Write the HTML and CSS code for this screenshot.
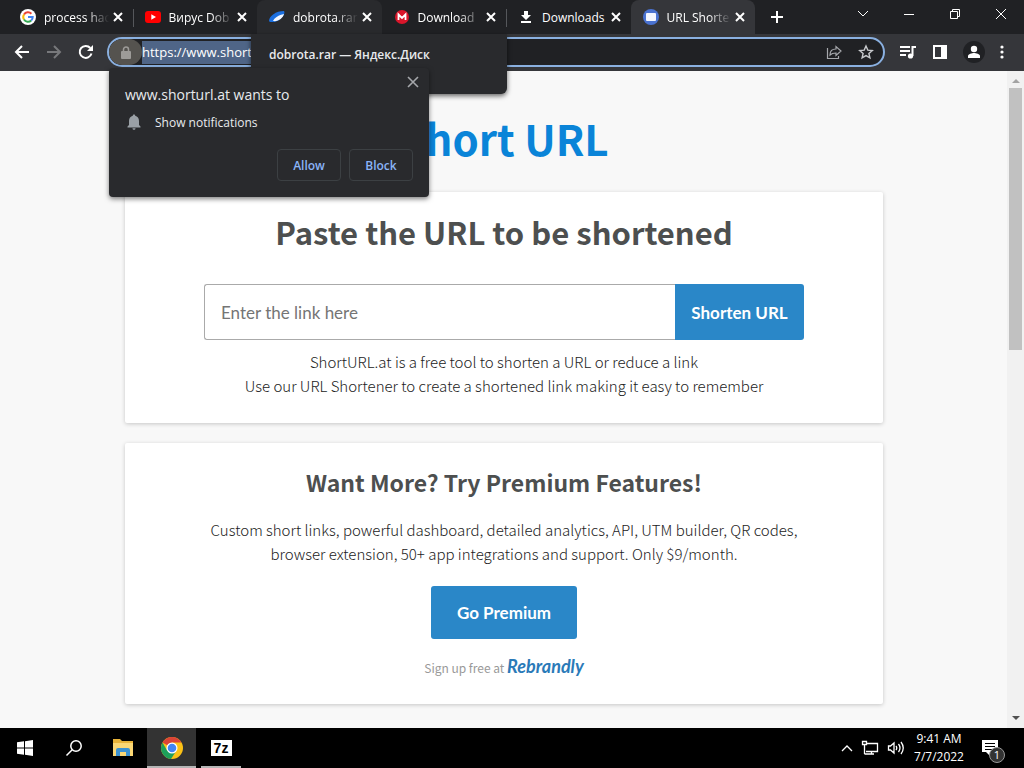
FILE: index.html
```html
<!DOCTYPE html>
<html lang="en">
<head>
  <meta charset="UTF-8">
  <meta name="viewport" content="width=device-width, initial-scale=1.0">
  <title>URL Shortener</title>
  <link rel="stylesheet" href="styles.css">
</head>
<body>
  <header class="browser">
    <div class="tabstrip">
      <div class="tabs">
        <div class="tab">
          <svg class="favicon" viewBox="0 0 16 16"><circle cx="8" cy="8" r="8" fill="#fff"/><g fill="none" stroke-width="2"><path d="M11.4 4.7A4.7 4.7 0 0 0 4 5.5" stroke="#ea4335"/><path d="M4 5.5a4.7 4.7 0 0 0 0 5" stroke="#fbbc05"/><path d="M4 10.5a4.7 4.7 0 0 0 7.2 1" stroke="#34a853"/><path d="M11.2 11.5A4.7 4.7 0 0 0 12.7 8H8" stroke="#4285f4"/></g></svg>
          <span class="title">process hac</span>
          <button class="close" aria-label="Close tab"><svg viewBox="0 0 10 10"><path d="M1 1l8 8M9 1L1 9"/></svg></button>
        </div>
        <div class="tab line">
          <svg class="favicon" viewBox="0 0 16 16"><rect y="2" width="16" height="12" rx="3" fill="#f00"/><path d="M6.300 5.300L11 8l-4.700 2.700z" fill="#fff"/></svg>
          <span class="title">Вирус Dob</span>
          <button class="close" aria-label="Close tab"><svg viewBox="0 0 10 10"><path d="M1 1l8 8M9 1L1 9"/></svg></button>
        </div>
        <div class="tab hover">
          <svg class="favicon" viewBox="0 0 16 16"><path d="M0 12C0 7 7 2 15 2c2 3-4 11-11 11-2 0-4 0-4-1z" fill="#1b6fe0"/><path d="M4 12c1-3 6-6 11-7-1 4-6 8-11 7z" fill="#f4f8ff"/></svg>
          <span class="title">dobrota.rar</span>
          <button class="close" aria-label="Close tab"><svg viewBox="0 0 10 10"><path d="M1 1l8 8M9 1L1 9"/></svg></button>
        </div>
        <div class="tab">
          <svg class="favicon" viewBox="0 0 16 16"><circle cx="8" cy="8" r="7" fill="#d9162b"/><path d="M4.500 11V5.500L8 9l3.500-3.500V11" fill="none" stroke="#fff" stroke-width="1.800"/></svg>
          <span class="title">Download</span>
          <button class="close" aria-label="Close tab"><svg viewBox="0 0 10 10"><path d="M1 1l8 8M9 1L1 9"/></svg></button>
        </div>
        <div class="tab line">
          <svg class="favicon" viewBox="0 0 16 16"><path d="M6 2h4v4h3l-5 5-5-5h3zM3 12h10v2H3z" fill="#fff"/></svg>
          <span class="title whole">Downloads</span>
          <button class="close" aria-label="Close tab"><svg viewBox="0 0 10 10"><path d="M1 1l8 8M9 1L1 9"/></svg></button>
        </div>
        <div class="tab active">
          <svg class="favicon" viewBox="0 0 16 16"><circle cx="8" cy="8" r="8" fill="#4a72d0"/><rect x="3" y="4" width="10" height="8" rx="1" fill="#f3f6ff"/></svg>
          <span class="title">URL Shorte</span>
          <button class="close" aria-label="Close tab"><svg viewBox="0 0 10 10"><path d="M1 1l8 8M9 1L1 9"/></svg></button>
        </div>
      </div>
      <button class="icon new-tab" aria-label="New tab"><svg width="14" height="14" viewBox="0 0 14 14"><path d="M7 1v12M1 7h12" stroke="#fff" stroke-width="2"/></svg></button>
      <div class="window-buttons">
        <button class="icon" aria-label="Search tabs"><svg width="12" height="12" viewBox="0 0 12 12"><path d="M1 3l5 5 5-5"/></svg></button>
        <button class="icon" aria-label="Minimize"><svg width="12" height="12" viewBox="0 0 12 12"><path d="M1 6.500h10"/></svg></button>
        <button class="icon" aria-label="Restore"><svg width="12" height="12" viewBox="0 0 12 12"><path d="M1.500 3.500h7v7h-7zM3.500 3.500v-2h7v7h-2"/></svg></button>
        <button class="icon" aria-label="Close"><svg width="12" height="12" viewBox="0 0 12 12"><path d="M1 1l10 10M11 1L1 11"/></svg></button>
      </div>
    </div>

    <div class="toolbar">
      <div class="nav">
        <button class="icon" aria-label="Back"><svg width="16" height="16" viewBox="0 0 16 16"><path d="M15 8H2M8 2L2 8l6 6" stroke="#fff" stroke-width="2"/></svg></button>
        <button class="icon" aria-label="Forward"><svg width="16" height="16" viewBox="0 0 16 16"><path d="M1 8h13M8 2l6 6-6 6" stroke="#77787b" stroke-width="2"/></svg></button>
        <button class="icon" aria-label="Reload"><svg width="16" height="16" viewBox="0 0 16 16"><path d="M13.500 9.500A6 6 0 1 1 12.300 4" stroke="#fff" stroke-width="2"/><path d="M15 1v6H9z" fill="#fff"/></svg></button>
      </div>
      <div class="omnibox">
        <span class="lock"><svg width="10" height="13" viewBox="0 0 10 13"><rect y="5" width="10" height="8" rx="1" fill="#9d9b98"/><path d="M2.500 5V3.500a2.500 2.500 0 0 1 5 0V5" fill="none" stroke="#9d9b98" stroke-width="1.500"/></svg></span>
        <input class="address" type="text" aria-label="Address" value="https://www.short">
        <div class="omnibox-icons">
          <button class="icon" aria-label="Share"><svg width="16" height="16" viewBox="0 0 16 16"><path d="M1.500 4v10.500h11V12M4 11c0-4 2-6 6-6V2.500L15 7l-5 4.500V9C7 9 5.500 9.500 4 11z" stroke="#a5a7ab" stroke-width="1.200"/></svg></button>
          <button class="icon" aria-label="Bookmark"><svg width="16" height="16" viewBox="0 0 16 16"><path d="M8 2l1.800 4.100 4.500.4-3.400 3 1 4.400L8 11.600l-3.900 2.300 1-4.400-3.400-3 4.500-.4z" stroke="#c8cacd" stroke-width="1.400"/></svg></button>
        </div>
      </div>
      <div class="actions">
        <button class="icon" aria-label="Media"><svg width="18" height="16" viewBox="0 0 18 16"><path d="M1 3h10M1 7h10M1 11h6M13.500 12V3H17" stroke="#fff" stroke-width="2"/><circle cx="11.500" cy="12" r="2.600" fill="#fff"/></svg></button>
        <button class="icon" aria-label="Side panel"><svg width="16" height="16" viewBox="0 0 16 16"><path d="M2 2h12v12H2z" stroke="#fff" stroke-width="2"/><path d="M9 2h5v12H9z" fill="#fff"/></svg></button>
        <button class="icon" aria-label="Profile"><svg width="22" height="22" viewBox="0 0 22 22"><circle cx="11" cy="11" r="11" fill="#202124"/><circle cx="11" cy="8" r="3.200" fill="#fff"/><path d="M5 17v-2c0-2 4-3 6-3s6 1 6 3v2z" fill="#fff"/></svg></button>
        <button class="icon" aria-label="Menu"><svg width="4" height="14" viewBox="0 0 4 14"><g fill="#fff"><circle cx="2" cy="2" r="1.600"/><circle cx="2" cy="7" r="1.600"/><circle cx="2" cy="12" r="1.600"/></g></svg></button>
      </div>
    </div>

    <div class="hover-card">dobrota.rar — Яндекс.Диск</div>

    <div class="permission" role="dialog" aria-labelledby="permission-title">
      <div class="permission-head">
        <span id="permission-title">www.shorturl.at wants to</span>
        <button class="icon dismiss" aria-label="Dismiss"><svg width="12" height="12" viewBox="0 0 12 12"><path d="M1 1l10 10M11 1L1 11" stroke="#a5a7ab" stroke-width="1.600"/></svg></button>
      </div>
      <div class="permission-item">
        <svg width="18" height="18" viewBox="0 0 18 18"><path d="M9 1.500c.8 0 1.200.5 1.200 1.300C12.500 3.400 14 5.300 14 8v4l1.500 1.500v1h-13v-1L4 12V8c0-2.700 1.500-4.600 3.800-5.200 0-.8.400-1.300 1.200-1.300zM7.500 15.300h3c0 1-.6 1.500-1.500 1.500s-1.500-.5-1.500-1.500z" fill="#9aa0a6"/></svg>
        <span>Show notifications</span>
      </div>
      <div class="permission-buttons">
        <button>Allow</button>
        <button>Block</button>
      </div>
    </div>
  </header>

  <div class="viewport">
    <main class="page">
      <h1>Short URL</h1>

      <section class="card shorten">
        <h2>Paste the URL to be shortened</h2>
        <form class="url-form">
          <input type="text" aria-label="Link" placeholder="Enter the link here">
          <button type="button">Shorten URL</button>
        </form>
        <p>ShortURL.at is a free tool to shorten a URL or reduce a link<br>
        Use our URL Shortener to create a shortened link making it easy to remember</p>
      </section>

      <section class="card premium">
        <h3>Want More? Try Premium Features!</h3>
        <p>Custom short links, powerful dashboard, detailed analytics, API, UTM builder, QR codes,<br>
        browser extension, 50+ app integrations and support. Only $9/month.</p>
        <a class="button" href="#">Go Premium</a>
        <div class="signup">Sign up free at <a href="#">Rebrandly</a></div>
      </section>
    </main>
    <div class="scrollbar">
      <svg width="8" height="5" viewBox="0 0 8 5"><path d="M0 5l4-4 4 4z" fill="#a3a3a3"/></svg>
      <div class="track"><div class="thumb"></div></div>
      <svg width="8" height="5" viewBox="0 0 8 5"><path d="M0 0l4 4 4-4z" fill="#505050"/></svg>
    </div>
  </div>

  <footer class="taskbar">
    <button class="task" aria-label="Start"><svg width="16" height="16" viewBox="0 0 16 16"><path d="M0 2.300l7-1v6.300H0zM8 1.200L16 0v7.600H8zM0 8.500h7v6.300l-7-1zM8 8.500h8V16l-8-1.200z" fill="#fff"/></svg></button>
    <button class="task" aria-label="Search"><svg width="18" height="18" viewBox="0 0 18 18"><g fill="none" stroke="#fff" stroke-width="1.500"><circle cx="11" cy="7" r="5.200"/><path d="M7.200 10.800L1.500 16.500"/></g></svg></button>
    <button class="task" aria-label="File Explorer"><svg width="22" height="20" viewBox="0 0 22 20"><path d="M1 1h7l2 2h11v15H1z" fill="#e8b339"/><path d="M1 5h20v13H1z" fill="#fbd774"/><path d="M4 18v-6q0-2 2-2h10q2 0 2 2v6h-4v-4H8v4z" fill="#3d92d0"/></svg></button>
    <button class="task current" aria-label="Chrome"><svg width="24" height="24" viewBox="0 0 24 24"><circle cx="12" cy="12" r="11" fill="#fbc116"/><path d="M12 12L2.500 6.500A11 11 0 0 1 21.500 6.500H12z" fill="#db4437"/><path d="M2.500 6.500A11 11 0 0 0 11 23l5.500-8.500L12 12l-4.800 2.700z" fill="#1da05b"/><circle cx="12" cy="12" r="5.500" fill="#fff"/><circle cx="12" cy="12" r="4.300" fill="#4285f4"/></svg></button>
    <button class="task open" aria-label="7-Zip"><span class="sevenzip">7z</span></button>
    <div class="tray">
      <svg width="12" height="12" viewBox="0 0 12 12"><path d="M1 9l5-5 5 5"/></svg>
      <svg width="18" height="16" viewBox="0 0 18 16"><path d="M5 3.500h11.500v8H5M1.500 1.500h4v3h-4zM3.500 4.500v9.500M3.500 14H13M10.500 12v2"/></svg>
      <svg width="18" height="16" viewBox="0 0 18 16"><path d="M1.500 6v4h2L7 13V3L3.500 6zM9 6q1.500 2 0 4M11.500 4q3 4 0 8M14 2q4.500 6 0 12"/></svg>
      <div class="clock"><span>9:41 AM</span><span>7/7/2022</span></div>
      <div class="notifications">
        <svg width="18" height="18" viewBox="0 0 18 18"><path d="M1 1h16v12H9v4l-4-4H1z" fill="#fff"/><path d="M4 4.500h10M4 7.500h10M4 10.500h7" stroke="#000"/></svg>
        <span class="badge">1</span>
      </div>
    </div>
  </footer>
</body>
</html>
```
FILE: styles.css
```css
* {
  box-sizing: border-box;
}
body {
  margin: 0;
  height: 100vh;
  display: flex;
  flex-direction: column;
  overflow: hidden;
  background: #f8f8f8;
  font-family: "Noto Sans CJK SC", "Noto Sans", sans-serif;
}
button {
  font-family: inherit;
  cursor: pointer;
}
svg {
  flex: none;
  display: block;
}

/* browser chrome */
.browser {
  position: relative;
  z-index: 1;
  color: #fff;
  font-family: "Open Sans", "Noto Sans", sans-serif;
  font-size: 12px;
}
.tabstrip {
  display: flex;
  height: 34px;
  padding-left: 8px;
  background: #202124;
}
.tabs {
  flex: 0 1 747px;
  display: grid;
  grid-template-columns: repeat(6, 1fr);
}
.tab {
  display: flex;
  align-items: center;
  gap: 8px;
  padding: 0 10px 0 12px;
  min-width: 0;
  border-radius: 8px 8px 0 0;
}
.tab.line {
  background: linear-gradient(#55575b, #55575b) 0 9px / 1px 18px no-repeat;
}
.tab.hover {
  background: #292a2d;
}
.tab.active {
  background: #35363a;
}
.favicon {
  width: 16px;
  height: 16px;
}
.title {
  flex: 1;
  min-width: 0;
  margin-right: -4px;
  overflow: hidden;
  white-space: nowrap;
  -webkit-mask-image: linear-gradient(90deg, #000 65%, transparent);
  mask-image: linear-gradient(90deg, #000 65%, transparent);
}
.title.whole {
  -webkit-mask-image: none;
  mask-image: none;
}
.close {
  flex: none;
  width: 10px;
  height: 10px;
  padding: 0;
  border: 0;
  background: none;
}
.close path {
  stroke: #fff;
  stroke-width: 2;
}
.icon {
  display: flex;
  align-items: center;
  justify-content: center;
  padding: 0;
  border: 0;
  background: none;
}
.icon svg {
  fill: none;
}
.new-tab {
  width: 44px;
}
.window-buttons {
  display: flex;
  margin-left: auto;
  padding-bottom: 6px;
}
.window-buttons .icon {
  width: 46px;
}
.window-buttons path {
  stroke: #fff;
}
.toolbar {
  display: flex;
  align-items: center;
  height: 37px;
  padding-bottom: 1px;
  background: #35363a;
}
.nav {
  display: flex;
  gap: 16px;
  padding: 0 13px 0 14px;
}
.omnibox {
  flex: 1;
  display: flex;
  align-items: center;
  height: 30px;
  border: 2px solid #8ab0e0;
  border-radius: 15px;
  background: #202124;
  overflow: hidden;
}
.lock {
  display: flex;
  align-items: center;
  justify-content: center;
  width: 33px;
  height: 26px;
  border-radius: 13px;
  background: #55534f;
}
.address {
  width: 164px;
  height: 23px;
  padding: 0;
  border: 0;
  background: #4f6587;
  color: #fff;
  font: 13px "Open Sans", "Noto Sans", sans-serif;
}
.omnibox-icons {
  display: flex;
  gap: 16px;
  margin-left: auto;
  padding-right: 9px;
}
.actions {
  display: flex;
  align-items: center;
  gap: 15px;
  padding: 0 20px 0 14px;
}
.hover-card {
  position: absolute;
  top: 34px;
  left: 251px;
  width: 256px;
  height: 60px;
  padding: 12px 18px;
  border-radius: 0 0 6px 6px;
  background: #292a2d;
  box-shadow: 0 2px 5px rgba(0,0,0,0.6);
  color: #e8eaed;
  font-weight: 600;
  line-height: 18px;
}
.permission {
  position: absolute;
  top: 68px;
  left: 109px;
  width: 320px;
  padding: 6px 16px 16px;
  border-radius: 4px;
  background: #292a2d;
  box-shadow: 0 2px 5px rgba(0,0,0,0.5);
  color: #e8eaed;
}
.permission-head {
  display: flex;
  justify-content: space-between;
  align-items: flex-start;
  font-size: 14px;
  line-height: 20px;
}
#permission-title {
  padding-top: 11px;
}
.dismiss {
  height: 16px;
  margin-right: -6px;
}
.permission-item {
  display: flex;
  align-items: center;
  gap: 12px;
  height: 34px;
}
.permission-buttons {
  display: flex;
  justify-content: flex-end;
  gap: 8px;
  margin-top: 10px;
}
.permission-buttons button {
  width: 64px;
  height: 32px;
  border: 1px solid #3c4043;
  border-radius: 4px;
  background: none;
  color: #8ab4f8;
  font-size: 12px;
  font-weight: 600;
}

/* page */
.viewport {
  flex: 1;
  min-height: 0;
  display: flex;
}
.page {
  flex: 1;
  padding: 0 124px 0 125px;
  overflow: hidden;
  text-align: center;
  color: #222;
}
h1, h2, h3 {
  margin: 0;
  color: #4d4f4f;
  font-weight: bold;
}
h1 {
  padding: 37px 0 24px;
  color: #0a84d8;
  font-size: 42px;
  line-height: 60px;
}
.card {
  margin-bottom: 20px;
  background: #fff;
  border-radius: 2px;
  box-shadow: 0 1px 4px rgba(0,0,0,0.2);
}
.card p {
  margin: 0;
  font-size: 15px;
  font-weight: 300;
  line-height: 24px;
}
.shorten {
  padding: 16px 24px 25px;
}
.shorten h2 {
  font-size: 31px;
  line-height: 48px;
}
.url-form {
  display: flex;
  max-width: 600px;
  margin: 28px auto 10px;
}
.url-form input {
  flex: 1;
  min-width: 0;
  height: 56px;
  padding: 0 16px;
  border: 1px solid #aaa;
  border-right: 0;
  border-radius: 3px 0 0 3px;
  font: 17px Lato, sans-serif;
}
.url-form input::placeholder {
  color: #757575;
}
.url-form button, .button {
  border: 0;
  background: #2a87c8;
  color: #fff;
  font: bold 17px Lato, sans-serif;
}
.url-form button {
  width: 129px;
  padding: 0;
  border-radius: 0 3px 3px 0;
}
.premium {
  padding: 21px 24px 24px;
}
.premium h3 {
  margin-bottom: 18px;
  font-size: 23px;
  line-height: 36px;
}
.button {
  display: inline-block;
  margin-top: 20px;
  padding: 0 26px;
  border-radius: 3px;
  line-height: 53px;
  text-decoration: none;
}
.signup {
  margin-top: 16px;
  color: #999;
  font-size: 12px;
  line-height: 24px;
}
.signup a {
  color: #2a7ab8;
  font: italic bold 18px Lato, sans-serif;
  text-decoration: none;
}
.scrollbar {
  width: 17px;
  display: flex;
  flex-direction: column;
  align-items: center;
  padding: 7px 0;
  background: #f1f1f1;
}
.track {
  flex: 1;
  width: 13px;
  margin: 5px 0;
}
.thumb {
  height: 42%;
  background: #c1c1c1;
}

/* taskbar */
.taskbar {
  display: flex;
  height: 40px;
  background: #000;
  color: #fff;
  font-family: "Open Sans", "Noto Sans", sans-serif;
  font-size: 12px;
}
.task {
  display: flex;
  align-items: center;
  justify-content: center;
  width: 49px;
  padding: 0;
  border: 0;
  background: none;
}
.task.current {
  background: #333;
  box-shadow: inset 0 -2px #b5b5b5;
}
.task.open {
  box-shadow: inset 0 -2px #b5b5b5;
  width: 40px;
  margin-left: 5px;
}
.sevenzip {
  width: 21px;
  border: 2px solid #fff;
  background: #fff;
  color: #000;
  font: bold 14px/12px "Liberation Sans", sans-serif;
}
.tray {
  display: flex;
  align-items: center;
  gap: 8px;
  margin-left: auto;
  padding-right: 25px;
}
.tray > svg path {
  fill: none;
  stroke: #fff;
  stroke-width: 1.300;
}
.clock {
  display: flex;
  flex-direction: column;
  width: 52px;
  text-align: center;
  line-height: 18px;
}
.notifications {
  position: relative;
  margin-left: 8px;
}
.badge {
  position: absolute;
  left: 8px;
  top: 8px;
  width: 16px;
  height: 16px;
  border: 1px solid #999;
  border-radius: 50%;
  background: #333;
  font-size: 11px;
  line-height: 14px;
  text-align: center;
}
```
